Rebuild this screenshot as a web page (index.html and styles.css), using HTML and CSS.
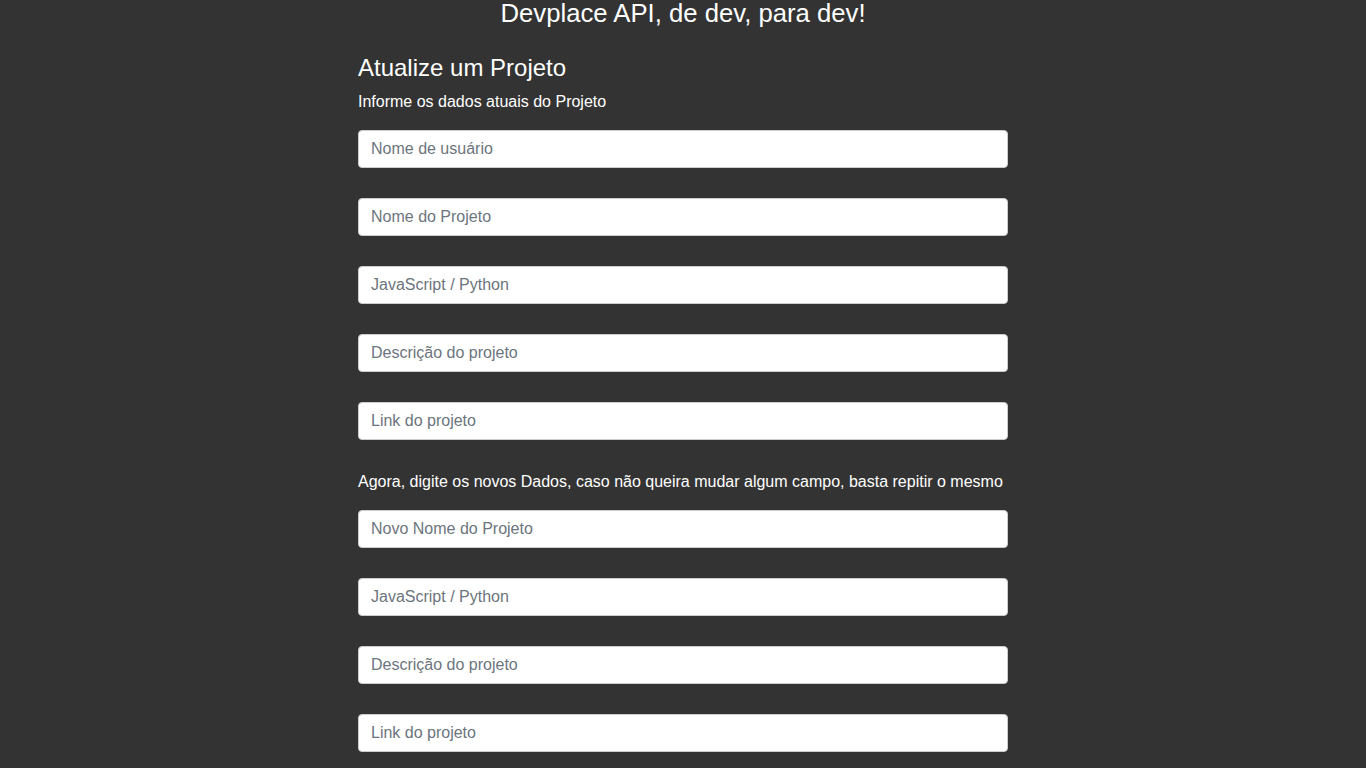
FILE: index.html
```html
<!DOCTYPE html>
<html lang="pt-BR">
<head>
<meta charset="utf-8">
<title>Devplace API</title>
<link rel="stylesheet" href="styles.css">
</head>
<body>
<h1 class="site-title">Devplace API, de dev, para dev!</h1>
<main class="container">
  <h2 class="form-title">Atualize um Projeto</h2>
  <p class="form-text first">Informe os dados atuais do Projeto</p>
  <form class="form">
    <input class="field" type="text" placeholder="Nome de usuário">
    <input class="field" type="text" placeholder="Nome do Projeto">
    <input class="field" type="text" placeholder="JavaScript / Python">
    <input class="field" type="text" placeholder="Descrição do projeto">
    <input class="field" type="text" placeholder="Link do projeto">
    <p class="form-text second">Agora, digite os novos Dados, caso não queira mudar algum campo, basta repitir o mesmo</p>
    <input class="field" type="text" placeholder="Novo Nome do Projeto">
    <input class="field" type="text" placeholder="JavaScript / Python">
    <input class="field" type="text" placeholder="Descrição do projeto">
    <input class="field" type="text" placeholder="Link do projeto">
  </form>
</main>
</body>
</html>
```

FILE: styles.css
```css
* { box-sizing: border-box; }
html, body {
  margin: 0;
  padding: 0;
  background: #333333;
  color: #ffffff;
  font-family: "Liberation Sans", Arial, sans-serif;
}
.site-title {
  margin: 0;
  padding-top: 0;
  font-size: 25.7px;
  font-weight: normal;
  line-height: 26px;
  text-align: center;
}
.container {
  width: 650px;
  margin: 0 auto;
}
.form-title {
  margin: 28px 0 0;
  font-size: 24px;
  font-weight: normal;
  line-height: 28px;
}
.form-text {
  margin: 0;
  font-size: 16px;
  line-height: 20px;
}
.form-text.first {
  margin-top: 10px;
  margin-bottom: 18px;
}
.form-text.second {
  margin: 2px 0 18px;
}
.form {
  display: flex;
  flex-direction: column;
}
.field {
  display: block;
  width: 100%;
  height: 38px;
  margin: 0 0 30px;
  padding: 6px 12px;
  border: 1px solid #cccccc;
  border-radius: 4px;
  background: #ffffff;
  font-family: "Liberation Sans", Arial, sans-serif;
  font-size: 16px;
  color: #555;
}
.field::placeholder {
  color: #6c757d;
}
```
